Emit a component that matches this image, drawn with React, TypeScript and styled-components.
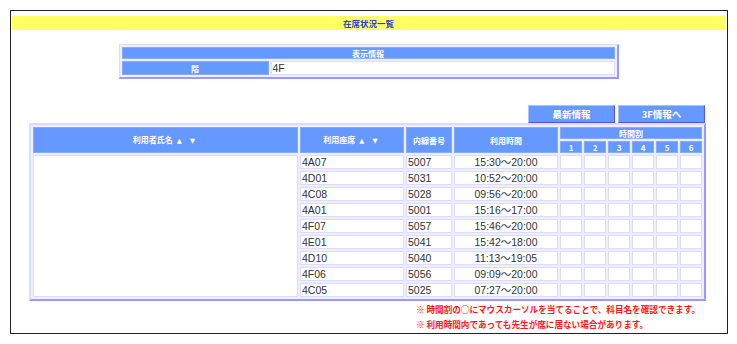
import React from "react";
import styled, { createGlobalStyle } from "styled-components";

const GlobalStyle = createGlobalStyle`
  html, body {
    margin: 0;
    background: #fff;
  }
  body {
    font-family: "Liberation Sans", "Noto Sans CJK JP", sans-serif;
  }
`;

const JP = `"Noto Sans CJK JP", "Liberation Sans", sans-serif`;

const StyledFrame = styled.div`
  margin: 10px;
  width: 718px;
  height: 324px;
  box-sizing: border-box;
  border: 1px solid #222;
  padding: 5px 2px 0 1px;
`;

const StyledTitle = styled.div`
  height: 14px;
  background: #ffff66;
  display: flex;
  align-items: center;
  justify-content: center;
  color: #2a3ae0;
  font: bold 8.5px ${JP};
`;

const StyledInfo = styled.table`
  width: 500px;
  margin: 14px auto 0;
  border-collapse: separate;
  border-spacing: 2px;
  border-style: solid;
  border-width: 1px 2px 2px 1px;
  border-color: #dcdcff #9999ff #9999ff #dcdcff;
  background: #eeeeff;

  td {
    padding: 0;
  }
`;

const StyledHead = styled.td<{ $h?: number }>`
  height: ${(p) => p.$h ?? 12}px;
  box-sizing: border-box;
  background: #6699ff;
  border: 1px solid #85adff;
  color: #fff;
  font: bold 8px ${JP};
  text-align: center;
  vertical-align: middle;
  line-height: 9px;
  white-space: nowrap;
`;

const StyledSort = styled.span`
  font: bold 6.5px "DejaVu Sans", sans-serif;
  margin-left: 4px;
  letter-spacing: 3px;
`;

const StyledCell = styled.td<{ $center?: boolean }>`
  height: 14px;
  box-sizing: border-box;
  background: #fff;
  border: 1px solid #dcdcff;
  color: #333;
  font-size: 10.5px;
  line-height: 11px;
  padding: 0 1px !important;
  text-align: ${(p) => (p.$center ? "center" : "left")};
  white-space: nowrap;
`;

const StyledSection = styled.div`
  width: 677px;
  margin-left: 17px;
`;

const StyledToolbar = styled.div`
  margin-top: 26px;
  display: flex;
  justify-content: flex-end;
  gap: 3px;
  padding-right: 1px;
`;

const StyledButton = styled.button`
  width: 87px;
  height: 18px;
  padding: 0;
  background: #6699ff;
  border: 1px solid;
  border-color: #a8c4ff #5555dd #5555dd #a8c4ff;
  box-shadow: inset -1px -1px 0 #7a8cf0;
  color: #fff;
  font: bold 9.5px ${JP};
  cursor: pointer;
`;

const StyledTable = styled.table`
  width: 677px;
  table-layout: fixed;
  border-collapse: separate;
  border-spacing: 2px;
  border: 2px solid;
  border-color: #dcdcff #9999ff #9999ff #dcdcff;
  background: #eeeeff;

  td {
    padding: 0;
  }
`;

const StyledNotes = styled.div`
  display: flex;
  justify-content: flex-end;
  padding-right: 6px;
  margin-top: 1px;
`;

const StyledNoteList = styled.div`
  color: #ff1a1a;
  font: bold 8.6px ${JP};
  line-height: 15px;
`;

const rows = [
  ["4A07", "5007", "15:30～20:00"],
  ["4D01", "5031", "10:52～20:00"],
  ["4C08", "5028", "09:56～20:00"],
  ["4A01", "5001", "15:16～17:00"],
  ["4F07", "5057", "15:46～20:00"],
  ["4E01", "5041", "15:42～18:00"],
  ["4D10", "5040", "11:13～19:05"],
  ["4F06", "5056", "09:09～20:00"],
  ["4C05", "5025", "07:27～20:00"],
];

const periods = [1, 2, 3, 4, 5, 6];

export default function App() {
  return (
    <>
      <GlobalStyle />
      <StyledFrame>
        <StyledTitle>在席状況一覧</StyledTitle>

        <StyledInfo>
          <tbody>
            <tr>
              <StyledHead colSpan={2}>表示情報</StyledHead>
            </tr>
            <tr>
              <StyledHead $h={14} style={{ width: 147 }}>
                階
              </StyledHead>
              <StyledCell>4F</StyledCell>
            </tr>
          </tbody>
        </StyledInfo>

        <StyledSection>
          <StyledToolbar>
            <StyledButton>最新情報</StyledButton>
            <StyledButton>3F情報へ</StyledButton>
          </StyledToolbar>

          <StyledTable>
            <colgroup>
              <col style={{ width: 265 }} />
              <col style={{ width: 104 }} />
              <col style={{ width: 46 }} />
              <col style={{ width: 104 }} />
              {periods.map((n) => (
                <col key={n} style={{ width: 22 }} />
              ))}
            </colgroup>
            <tbody>
              <tr>
                <StyledHead rowSpan={2}>
                  利用者氏名<StyledSort>▲ ▼</StyledSort>
                </StyledHead>
                <StyledHead rowSpan={2}>
                  利用座席<StyledSort>▲ ▼</StyledSort>
                </StyledHead>
                <StyledHead rowSpan={2}>内線番号</StyledHead>
                <StyledHead rowSpan={2}>利用時間</StyledHead>
                <StyledHead colSpan={6}>時間割</StyledHead>
              </tr>
              <tr>
                {periods.map((n) => (
                  <StyledHead key={n}>{n}</StyledHead>
                ))}
              </tr>
              {rows.map(([seat, ext, time], i) => (
                <tr key={seat}>
                  {i === 0 && <StyledCell rowSpan={rows.length} />}
                  <StyledCell>{seat}</StyledCell>
                  <StyledCell>{ext}</StyledCell>
                  <StyledCell $center>{time}</StyledCell>
                  {periods.map((n) => (
                    <StyledCell key={n} />
                  ))}
                </tr>
              ))}
            </tbody>
          </StyledTable>

          <StyledNotes>
            <StyledNoteList>
              <div>※ 時間割の○にマウスカーソルを当てることで、科目名を確認できます。</div>
              <div>※ 利用時間内であっても先生が席に居ない場合があります。</div>
            </StyledNoteList>
          </StyledNotes>
        </StyledSection>
      </StyledFrame>
    </>
  );
}
